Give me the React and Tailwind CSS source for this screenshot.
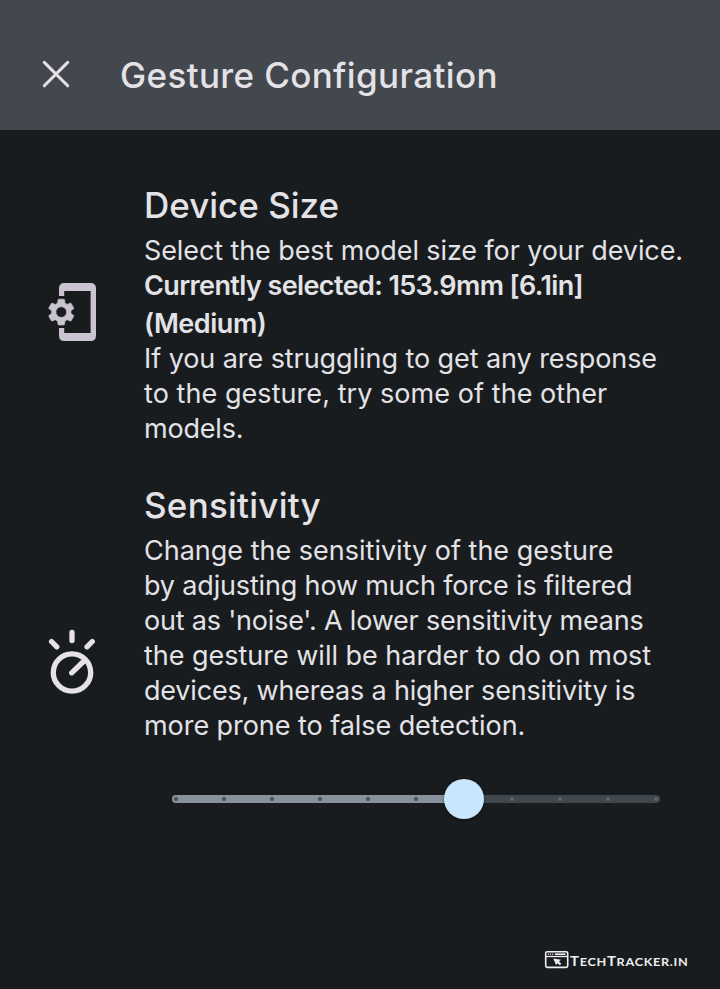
import React from 'react';

const TICKS = [0, 1, 2, 3, 4, 5, 6, 7, 8, 9, 10];

function PhoneSettingsIcon() {
  return (
    <svg className="mt-[96px] ml-[46px] h-[68px] w-[54px]" viewBox="46 278 54 68" fill="#cac4d0">
      <path d="M59 296V288.500Q59 283 64.500 283H90.500Q96 283 96 288.500V335.500Q96 341 90.500 341H64.500Q59 341 59 335.500V328H64.200V333H90.600V291H64.200V296Z" />
      <g transform="translate(45.200 296) scale(1.340)" stroke="#cac4d0" strokeWidth="0.500">
        <path d="M19.140 12.940c.04-.3.06-.61.06-.94 0-.32-.02-.64-.07-.94l2.030-1.580c.18-.14.23-.41.12-.61l-1.920-3.320c-.12-.22-.37-.29-.59-.22l-2.390.96c-.5-.38-1.030-.7-1.620-.94l-.36-2.540c-.04-.24-.24-.41-.48-.41h-3.840c-.24 0-.43.17-.47.41l-.36 2.540c-.59.24-1.130.57-1.620.94l-2.390-.96c-.22-.08-.47 0-.59.22L2.740 8.870c-.12.21-.08.47.12.61l2.030 1.580c-.05.3-.09.63-.09.94s.02.64.07.94l-2.030 1.580c-.18.14-.23.41-.12.61l1.920 3.320c.12.22.37.29.59.22l2.390-.96c.5.38 1.030.7 1.620.94l.36 2.540c.05.24.24.41.48.41h3.840c.24 0 .44-.17.47-.41l.36-2.540c.59-.24 1.130-.56 1.620-.94l2.390.96c.22.08.47 0 .59-.22l1.920-3.320c.12-.22.07-.47-.12-.61l-2.010-1.580zM12 16c-2.200 0-4-1.800-4-4s1.800-4 4-4 4 1.800 4 4-1.800 4-4 4z" />
      </g>
    </svg>
  );
}

function DialIcon() {
  return (
    <svg className="mt-[144px] ml-[46px] h-[72px] w-[54px]" viewBox="46 626 54 72" fill="none" stroke="#e5e1e6" strokeWidth="5.300" strokeLinecap="round">
      <circle cx="72" cy="672.500" r="18.700" />
      <path d="M71.700 672.800L84.500 660.500" />
      <path d="M72 632.500V640.500M51.500 641.500L56.800 646.800M92.300 641.500L87 646.800" />
    </svg>
  );
}

function Slider() {
  return (
    <div className="relative mt-[52px] ml-[172px] h-2 w-[488px] rounded-full bg-[#41484d]">
      <div className="h-2 w-[292px] rounded-l-full bg-[#89929c]" />
      <div className="absolute inset-0 flex items-center justify-between px-[2px]">
        {TICKS.map((t) => (
          <span key={t} className={t < 6 ? 'size-1 rounded-full bg-[#444c56]' : 'size-1 rounded-full bg-[#5c646b]'} />
        ))}
      </div>
      <div className="absolute top-[-16px] left-[272px] size-10 rounded-full bg-[#c9e6ff] shadow-[0_1px_3px_rgba(0,0,0,0.5)]" />
    </div>
  );
}

function Watermark() {
  return (
    <div className="mt-auto mb-[17px] ml-[544px] flex h-6 items-center text-[#eeeeef]">
      <svg className="h-[20px] w-[26px] shrink-0" viewBox="0 0 26 20" fill="none" stroke="currentColor">
        <rect x="1.700" y="1.700" width="22" height="15.700" rx="1.600" strokeWidth="1.600" />
        <path d="M2 6.500H23.500" strokeWidth="1.300" />
        <path d="M4 4.200H9.500" strokeWidth="1.300" strokeDasharray="1.200 .8" />
        <path d="M11 4.200H21.500" strokeWidth="1.600" />
        <path d="M9.300 8.600L17 9.800L15 11.600L17.300 13.800L15.800 15.300L13.500 13.200L12 15Z" fill="currentColor" stroke="none" />
      </svg>
      <span className="mt-[3px] origin-left scale-x-[1.150] font-['Lato'] text-[13px] leading-6 font-bold tracking-[0.600px] whitespace-nowrap">
        T<span className="text-[11px]">ECH</span>T<span className="text-[11px]">RACKER.IN</span>
      </span>
    </div>
  );
}

export default function App() {
  return (
    <div className="flex h-[989px] w-[720px] flex-col overflow-hidden bg-[#191c1f] font-['Inter','Roboto',sans-serif] whitespace-nowrap text-[#e3e2e6]">
      <header className="flex h-[130px] shrink-0 items-start bg-[#43474e]">
        <svg className="mt-[58px] ml-10 size-8 shrink-0" viewBox="0 0 32 32" fill="none" stroke="#e5e1e6" strokeWidth="3" strokeLinecap="round">
          <path d="M4.300 4.400L27.700 27.800M27.700 4.400L4.300 27.800" />
        </svg>
        <h1 className="mt-[52px] ml-12 text-[35px] leading-[46px] font-medium tracking-[0.360px]">Gesture Configuration</h1>
      </header>

      <main>
        <section className="mt-[52px] flex items-start">
          <div className="w-36 shrink-0">
            <PhoneSettingsIcon />
          </div>
          <div className="text-[27px] leading-[35px]">
            <h2 className="mb-[5px] text-[35px] leading-[46px] font-medium">Device Size</h2>
            <p className="tracking-[-0.100px]">Select the best model size for your device.</p>
            <p className="font-semibold tracking-[-0.610px]">Currently selected: 153.9mm [6.1in]</p>
            <p className="pt-[3px] font-semibold tracking-[-0.470px]">(Medium)</p>
            <p className="tracking-[-0.070px]">If you are struggling to get any response</p>
            <p className="tracking-[0.060px]">to the gesture, try some of the other</p>
            <p className="tracking-[-0.200px]">models.</p>
          </div>
        </section>

        <section className="mt-9 flex items-start">
          <div className="w-36 shrink-0">
            <DialIcon />
          </div>
          <div className="text-[27px] leading-[35px]">
            <h2 className="mb-[5px] text-[35px] leading-[46px] font-medium tracking-[0.240px]">Sensitivity</h2>
            <p>Change the sensitivity of the gesture</p>
            <p className="tracking-[-0.160px]">by adjusting how much force is filtered</p>
            <p className="tracking-[-0.200px]">out as 'noise'. A lower sensitivity means</p>
            <p className="tracking-[-0.020px]">the gesture will be harder to do on most</p>
            <p className="tracking-[-0.190px]">devices, whereas a higher sensitivity is</p>
            <p className="tracking-[-0.060px]">more prone to false detection.</p>
          </div>
        </section>

        <Slider />
      </main>

      <Watermark />
    </div>
  );
}
